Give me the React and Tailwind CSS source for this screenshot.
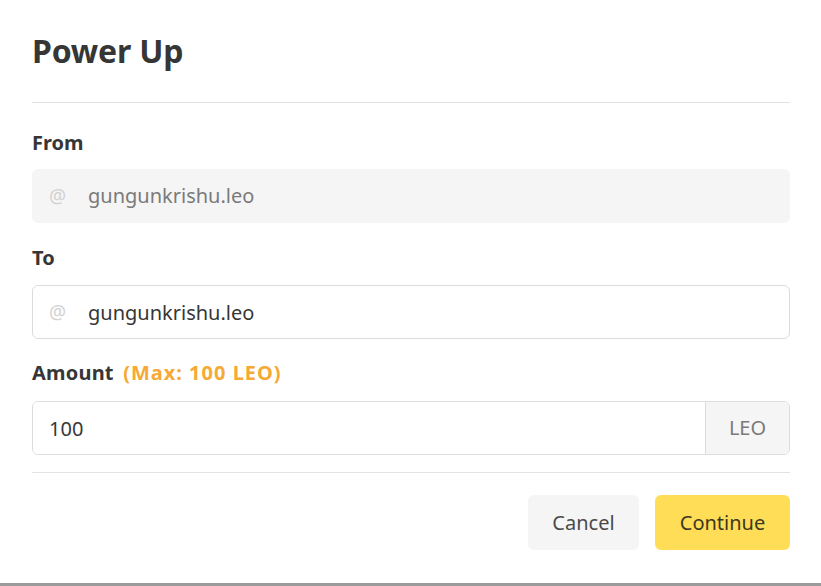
import { useState } from 'react';

export default function App() {
  const [to, setTo] = useState('gungunkrishu.leo');
  const [amount, setAmount] = useState('100');

  return (
    <div
      className="w-full min-h-[586px] bg-white flex flex-col text-[#363636]"
      style={{ fontFamily: '"Noto Sans", "Open Sans", sans-serif' }}
    >
      <div className="flex-1 px-8 pr-[31px] flex flex-col">
        <div className="h-[103px] flex items-center border-b border-[#e3e3e3]">
          <h1 className="text-[32px] font-bold leading-none tracking-[-0.2px]">Power Up</h1>
        </div>

        <label className="mt-[26px] h-7 leading-7 text-[20px] font-bold">From</label>
        <div className="mt-3 h-[54px] rounded-md bg-[#f5f5f5] border border-[#f5f5f5] flex items-center">
          <span className="w-[55px] pl-4 text-[19px] text-[#d2d2d2]">@</span>
          <span className="text-[20px] text-[#7a7a7a]">gungunkrishu.leo</span>
        </div>

        <label className="mt-[21px] h-7 leading-7 text-[20px] font-bold">To</label>
        <div className="mt-[13px] h-[54px] rounded-md bg-white border border-[#dcdcdc] flex items-center">
          <span className="w-[55px] pl-4 text-[19px] text-[#d2d2d2]">@</span>
          <input
            value={to}
            onChange={(e) => setTo(e.target.value)}
            className="flex-1 h-full outline-none bg-transparent text-[20px] text-[#363636]"
          />
        </div>

        <label className="mt-5 h-7 leading-7 text-[20px] font-bold tracking-[0.2px]">
          Amount <span className="text-[#f6a935] ml-1 tracking-[1px]">(Max: 100 LEO)</span>
        </label>
        <div className="mt-[14px] h-[54px] rounded-md border border-[#dcdcdc] flex overflow-hidden">
          <input
            value={amount}
            onChange={(e) => setAmount(e.target.value)}
            className="flex-1 h-full pl-4 outline-none bg-white text-[20px] text-[#363636]"
          />
          <div className="w-[84px] bg-[#f5f5f5] border-l border-[#dcdcdc] flex items-center justify-center text-[20px] text-[#7a7a7a]">
            LEO
          </div>
        </div>

        <div className="mt-[17px] border-t border-[#e3e3e3]" />

        <div className="mt-[22px] flex justify-end gap-4">
          <button className="w-[111px] h-[55px] rounded-md bg-[#f5f5f5] text-[20px] text-[#4a4a4a]">
            Cancel
          </button>
          <button className="w-[135px] h-[55px] rounded-md bg-[#ffdd57] text-[20px] text-[#3d3820]">
            Continue
          </button>
        </div>
      </div>
      <div className="h-[3px] bg-[#9b9b9b]" />
    </div>
  );
}
